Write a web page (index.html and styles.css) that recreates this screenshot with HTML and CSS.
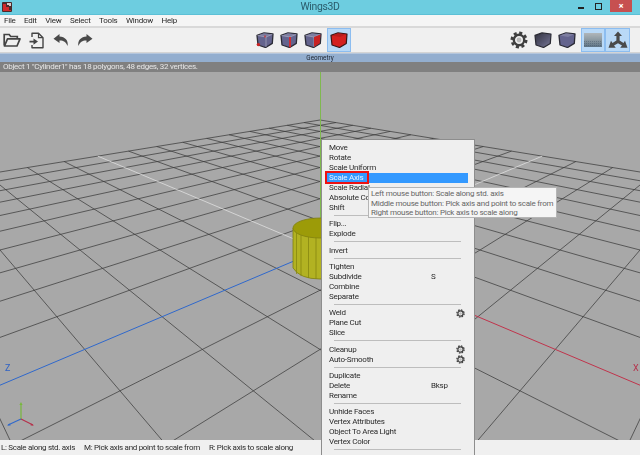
FILE: index.html
```html
<!DOCTYPE html>
<html lang="en">
<head>
<meta charset="utf-8">
<title>Wings3D</title>
<link rel="stylesheet" href="styles.css">
</head>
<body>
<svg class="defs" width="0" height="0" aria-hidden="true">
  <symbol id="cube-base" viewBox="0 0 18 16">
    <path d="M1 3.4 L8 .9 L17 2 L16.3 11.4 L9.6 15.5 L2 13 Z" fill="#64648e" stroke="#2b2b36" stroke-width="1.3" stroke-linejoin="round"/>
    <path d="M1.6 3.5 L8 1.2 L16.4 2.3 L10 5 Z" fill="#7d7da0"/>
    <path d="M1.6 3.5 L10 5 L16.4 2.3 M10 5 V15" fill="none" stroke="#b5b5c8" stroke-width=".6"/>
  </symbol>
  <symbol id="gear" viewBox="0 0 18 18">
    <circle cx="9" cy="9" r="5.2" fill="none" stroke="#3f3f3f" stroke-width="2.4"/>
    <circle cx="9" cy="9" r="7.2" fill="none" stroke="#3f3f3f" stroke-width="2.6" stroke-dasharray="3.1 2.55"/>
    <circle cx="9" cy="9" r="2.4" fill="#bbb"/>
  </symbol>
</svg>
<header class="titlebar">
  <svg class="appicon" width="10" height="10" viewBox="0 0 10 10"><rect width="10" height="10" rx="1" fill="#4a2b2b"/><path d="M1 2h3v3h3v3h2v1H1Z" fill="#d02a2a"/><path d="M5 1h4v3H7V3H5Z" fill="#d8c8c8"/></svg>
  <span class="title">Wings3D</span>
  <div class="winbtns">
    <span class="minimize"></span>
    <span class="restore"></span>
    <span class="close">×</span>
  </div>
</header>
<nav class="menubar">
  <span>File</span><span>Edit</span><span>View</span><span>Select</span><span>Tools</span><span>Window</span><span>Help</span>
</nav>
<section class="toolbar">
  <div class="tools-left">
    <svg class="ico" width="18" height="16" viewBox="0 0 18 16"><path d="M1.2 13.5V2.5h5l1.5 2h6.6v2.2" fill="none" stroke="#444" stroke-width="1.7"/><path d="M1.5 14 L4.5 6.8 H17 L14 14 Z" fill="none" stroke="#444" stroke-width="1.7" stroke-linejoin="round"/></svg>
    <svg class="ico" width="16" height="17" viewBox="0 0 16 17"><path d="M3 5V1.2h6.5l4.5 4.5v10H3V13" fill="none" stroke="#444" stroke-width="1.4" stroke-linejoin="round"/><path d="M9.5 1.2v4.5H14" fill="none" stroke="#444" stroke-width="1.2"/><path d="M.5 8.8h4V6.4L9 9.6l-4.5 3.2v-2.2h-4Z" fill="#444"/></svg>
    <svg class="ico" width="16" height="14" viewBox="0 0 16 14"><path d="M6.5 1 L0.5 5.8 L6.5 10 V7.4 C10 7.2 13 8.6 14.6 13 C15.6 7.6 12 3.8 6.5 3.6 Z" fill="#4a4a4a"/></svg>
    <svg class="ico" width="16" height="14" viewBox="0 0 16 14"><path d="M9.5 1 L15.5 5.8 L9.5 10 V7.4 C6 7.2 3 8.6 1.4 13 C.4 7.6 4 3.8 9.5 3.6 Z" fill="#4a4a4a"/></svg>
  </div>
  <div class="tools-mid">
    <span class="tool"><svg width="18" height="16"><use href="#cube-base"/><circle cx="2.4" cy="12.6" r="1.7" fill="#c22"/><path d="M9 3.4v2" stroke="#c22" stroke-width="1.2"/></svg></span>
    <span class="tool"><svg width="18" height="16"><use href="#cube-base"/><path d="M10 5V15.2" stroke="#d22" stroke-width="1.7"/></svg></span>
    <span class="tool"><svg width="18" height="16"><use href="#cube-base"/><path d="M10 5 L16.4 2.5 L15.8 11.2 L10 15Z" fill="#c92222"/></svg></span>
    <span class="tool active"><svg width="18" height="16" viewBox="0 0 18 16"><path d="M1 3.4 L8 .9 L17 2 L16.3 11.4 L9.6 15.5 L2 13 Z" fill="#d42020" stroke="#3a1616" stroke-width="1.2" stroke-linejoin="round"/><path d="M1.6 3.5 L8 1.2 L16.4 2.3 L10 5 Z" fill="#b81c1c"/></svg></span>
  </div>
  <div class="tools-right">
    <span class="tool"><svg width="18" height="18"><use href="#gear"/></svg></span>
    <span class="tool"><svg width="18" height="16"><defs><linearGradient id="dk" x1="0" y1="0" x2="1" y2="1"><stop offset="0" stop-color="#33333f"/><stop offset=".6" stop-color="#5a5a74"/><stop offset="1" stop-color="#7a7a96"/></linearGradient></defs><path d="M1 3.4 L8 .9 L17 2 L16.3 11.4 L9.6 15.5 L2 13 Z" fill="url(#dk)" stroke="#2a2a33" stroke-width="1.2" stroke-linejoin="round"/></svg></span>
    <span class="tool"><svg width="18" height="16" viewBox="0 0 18 16"><path d="M1 3.4 L8 .9 L17 2 L16.3 11.4 L9.6 15.5 L2 13 Z" fill="#64648e" stroke="#2b2b36" stroke-width="1.3" stroke-linejoin="round"/><path d="M1.6 3.5 L8 1.2 L16.4 2.3 L10 5 Z" fill="#7d7da0"/></svg></span>
    <span class="tool active"><svg width="18" height="16" viewBox="0 0 18 16"><defs><linearGradient id="fl" x1="0" y1="0" x2="0" y2="1"><stop offset="0" stop-color="#b0b6ba"/><stop offset=".45" stop-color="#8f9ca4"/><stop offset="1" stop-color="#5d7385"/></linearGradient></defs><rect y="1" width="18" height="14" fill="url(#fl)"/><path d="M0 9.5H18M0 11.5H18M0 13.5H18" stroke="#3f5163" stroke-opacity=".5" stroke-width=".8" stroke-dasharray="1 1"/></svg></span>
    <span class="tool active"><svg width="20" height="19" viewBox="0 0 20 19"><path d="M10 .5 L14 5 H11.6 V9.6 L15.5 12 L17 9.8 L19.5 16.8 H12.2 L14 14.6 L10 12.2 L6 14.6 L7.8 16.8 H.5 L3 9.8 L4.5 12 L8.4 9.6 V5 H6 Z" fill="#4a4a4a"/></svg></span>
  </div>
</section>
<div class="geombar">Geometry</div>
<main class="viewport">
  <div class="infobar">Object 1 "Cylinder1" has 18 polygons, 48 edges, 32 vertices.</div>
  <svg id="scene" class="scene" width="640" height="368" viewBox="0 72 640 368"></svg>
  <span class="label label-z">Z</span>
  <span class="label label-x">X</span>
  <div class="menu">
    <div class="mi">Move</div>
    <div class="mi">Rotate</div>
    <div class="mi">Scale Uniform</div>
    <div class="mi hl">Scale Axis</div>
    <div class="mi">Scale Radial</div>
    <div class="mi">Absolute Commands</div>
    <div class="mi">Shift</div>
    <div class="sep"></div>
    <div class="mi">Flip...</div>
    <div class="mi">Explode</div>
    <div class="sep"></div>
    <div class="mi">Invert</div>
    <div class="sep"></div>
    <div class="mi">Tighten</div>
    <div class="mi">Subdivide<span class="key">S</span></div>
    <div class="mi">Combine</div>
    <div class="mi">Separate</div>
    <div class="sep"></div>
    <div class="mi">Weld<svg class="opt" width="9" height="9"><use href="#gear"/></svg></div>
    <div class="mi">Plane Cut</div>
    <div class="mi">Slice</div>
    <div class="sep"></div>
    <div class="mi">Cleanup<svg class="opt" width="9" height="9"><use href="#gear"/></svg></div>
    <div class="mi">Auto-Smooth<svg class="opt" width="9" height="9"><use href="#gear"/></svg></div>
    <div class="sep"></div>
    <div class="mi">Duplicate</div>
    <div class="mi">Delete<span class="key">Bksp</span></div>
    <div class="mi">Rename</div>
    <div class="sep"></div>
    <div class="mi">Unhide Faces</div>
    <div class="mi">Vertex Attributes</div>
    <div class="mi">Object To Area Light</div>
    <div class="mi">Vertex Color</div>
    <div class="sep"></div>
  </div>
  <div class="redbox"></div>
  <div class="tooltip">
    <div>Left mouse button: Scale along std. axis</div>
    <div>Middle mouse button: Pick axis and point to scale from</div>
    <div>Right mouse button: Pick axis to scale along</div>
  </div>
</main>
<footer class="statusbar">
  <span>L: Scale along std. axis</span>
  <span>M: Pick axis and point to scale from</span>
  <span>R: Pick axis to scale along</span>
</footer>
<script src="scene.js"></script>
</body>
</html>
```
FILE: styles.css
```css
* { box-sizing: border-box; }
html, body { margin: 0; padding: 0; }
body {
  width: 640px;
  height: 455px;
  overflow: hidden;
  display: flex;
  flex-direction: column;
  font-family: Roboto, sans-serif;
  font-size: 8px;
  letter-spacing: -.24px;
  color: #2b2b2b;
  background: #f0f0f0;
  filter: blur(.25px);
}
.defs { position: absolute; }
.titlebar {
  height: 15px;
  flex: none;
  background: #6dcde0;
  display: flex;
  align-items: center;
  position: relative;
  padding-left: 2px;
  border-bottom: 1px solid #5cc0d6;
}
.title {
  position: absolute;
  left: 0;
  right: 0;
  top: 0;
  text-align: center;
  font-size: 10.4px;
  letter-spacing: -.3px;
  color: #2b5b6b;
  line-height: 14px;
}
.winbtns {
  position: absolute;
  right: 8px;
  top: 0;
  display: flex;
  align-items: flex-start;
}
.minimize { width: 6px; height: 2px; background: #222; margin: 7px 11px 0 0; }
.restore { width: 7px; height: 7px; border: 1px solid #222; margin: 3px 8px 0 0; }
.close {
  width: 22px;
  height: 12px;
  background: #c75050;
  color: #fff;
  font-size: 9px;
  font-weight: 700;
  line-height: 12px;
  text-align: center;
}
.menubar {
  height: 13px;
  flex: none;
  background: #f5f5f5;
  border-bottom: 2px solid #d9d9d9;
  display: flex;
  gap: 8.5px;
  padding-left: 4px;
  line-height: 11px;
}
.toolbar {
  height: 25px;
  flex: none;
  background: #f0f0f0;
  border-bottom: 1px solid #d4d4d4;
  position: relative;
  display: flex;
  align-items: center;
}
.tools-left { display: flex; align-items: center; gap: 8px; padding-left: 3px; }
.tools-mid {
  position: absolute;
  left: 253px;
  top: 0;
  height: 24px;
  display: flex;
}
.tools-right {
  position: absolute;
  left: 507px;
  top: 0;
  height: 24px;
  display: flex;
}
.tool {
  width: 24px;
  height: 24px;
  display: flex;
  align-items: center;
  justify-content: center;
}
.tool.active {
  background: #b9d9f7;
  border: 1px solid #8cbdf0;
}
.tool + .tool.active { margin-left: 2px; }
.tool.active + .tool.active { margin-left: 0; width: 25px; }
.geombar {
  height: 9px;
  flex: none;
  background: #93aecf;
  border-top: 1px solid #b5c6dc;
  text-align: center;
  font-size: 6.3px;
  letter-spacing: 0;
  line-height: 8px;
  color: #1d2430;
}
.viewport {
  flex: 1;
  position: relative;
  background: #a8a8a8;
  min-height: 0;
}
.infobar {
  height: 10px;
  background: #808080;
  color: #e6e6e6;
  padding-left: 3px;
  letter-spacing: -.27px;
  line-height: 10px;
  white-space: nowrap;
}
.scene { display: block; }
.label {
  position: absolute;
  font-size: 9px;
  line-height: 10px;
}
.label-z { left: 5px; top: 301px; color: #2f62c4; }
.label-x { left: 633px; top: 301px; color: #b5304a; }
.menu {
  position: absolute;
  left: 321px;
  top: 77px;
  width: 154px;
  height: 320px;
  background: #efefef;
  border: 1px solid #8d8d8d;
  padding: 3px 0 0 7px;
  overflow: hidden;
}
.mi {
  position: relative;
  height: 10px;
  line-height: 10px;
  white-space: nowrap;
}
.mi.hl {
  background: #3399ff;
  color: #e8f3ff;
  margin: 0 6px 0 -3px;
  padding-left: 3px;
}
.sep {
  height: 6.33px;
  margin: 0 13px 0 5px;
  position: relative;
}
.sep::after {
  content: "";
  position: absolute;
  left: 0;
  right: 0;
  top: 2px;
  height: 1px;
  background: #bdbdbd;
}
.key { position: absolute; left: 102px; top: 0; }
.opt { position: absolute; left: 127px; top: .5px; }
.redbox {
  position: absolute;
  left: 325px;
  top: 109px;
  width: 44px;
  height: 13px;
  border: 2px solid #ee1111;
}
.tooltip {
  position: absolute;
  left: 368px;
  top: 125px;
  width: 189px;
  height: 31px;
  background: #f5f5f5;
  border: 1px solid #b5b5b5;
  color: #666;
  padding: 1px 0 0 2px;
  line-height: 9.5px;
  white-space: nowrap;
}
.statusbar {
  height: 15px;
  flex: none;
  background: #f0f0f0;
  display: flex;
  gap: 9px;
  padding-left: 1px;
  letter-spacing: -.3px;
  line-height: 15px;
  white-space: nowrap;
}
```
FILE: scene.js
```js
(function () {
  var NS = "http://www.w3.org/2000/svg";
  var svg = document.getElementById("scene");
  var A = 40, B = 16.9, C = 0.08, OX = 320, OY = 250;

  function project(x, z) {
    var w = 1 - C * (x + z);
    return [OX + A * (x - z) / w, OY + B * (x + z) / w];
  }
  function add(name, attrs) {
    var el = document.createElementNS(NS, name);
    for (var k in attrs) el.setAttribute(k, attrs[k]);
    svg.appendChild(el);
    return el;
  }
  function seg(x1, z1, x2, z2, color, width, opacity) {
    var a = project(x1, z1), b = project(x2, z2);
    add("line", { x1: a[0], y1: a[1], x2: b[0], y2: b[1], stroke: color, "stroke-width": width, "stroke-opacity": opacity });
  }

  var i;
  for (i = -10; i <= 10; i++) {
    var far = Math.min(10, 11.25 - i);
    if (i !== 0) {
      seg(i, -10, i, far, "#3c3c3c", 1, 0.75);
      seg(-10, i, far, i, "#3c3c3c", 1, 0.75);
    }
  }
  seg(-10, 0, 0, 0, "#dcdcdc", 1, 0.85);
  seg(0, -10, 0, 0, "#dcdcdc", 1, 0.85);
  seg(0, 0, 10, 0, "#c0344c", 1, 1);
  seg(0, 0, 0, 10, "#2f68cc", 1, 1);

  add("line", { x1: 320.5, y1: 72, x2: 320.5, y2: 250, stroke: "#7fb84f", "stroke-width": 1 });

  // Cylinder: 18-sided body with a flat lit cap
  add("path", { d: "M293 228 V268 Q300 279 320 279 H340 V228 Z", fill: "#b2b222", stroke: "#80800e", "stroke-width": 0.8 });
  add("ellipse", { cx: 320, cy: 228, rx: 27, ry: 10, fill: "#9c9b08", stroke: "#80800e", "stroke-width": 0.8 });
  [296.5, 301, 308.5, 316].forEach(function (x) {
    var top = 228 + 10 * Math.sqrt(1 - Math.pow((x - 320) / 27, 2));
    add("line", { x1: x, y1: top, x2: x, y2: top + 41, stroke: "#86860f", "stroke-width": 0.8 });
  });

  // Orientation gizmo
  add("line", { x1: 21, y1: 419, x2: 21, y2: 404, stroke: "#77b83c", "stroke-width": 1.2 });
  add("path", { d: "M19.4 405 L21 402 L22.6 405 Z", fill: "#77b83c" });
  add("line", { x1: 21, y1: 419, x2: 8, y2: 425, stroke: "#2f68cc", "stroke-width": 1.2 });
  add("path", { d: "M10 423.4 L7 425.6 L10.6 425.6 Z", fill: "#2f68cc" });
  add("line", { x1: 21, y1: 419, x2: 33, y2: 425, stroke: "#b5304a", "stroke-width": 1.2 });
  add("path", { d: "M31 423.4 L34 425.6 L30.6 425.6 Z", fill: "#b5304a" });
})();
```
